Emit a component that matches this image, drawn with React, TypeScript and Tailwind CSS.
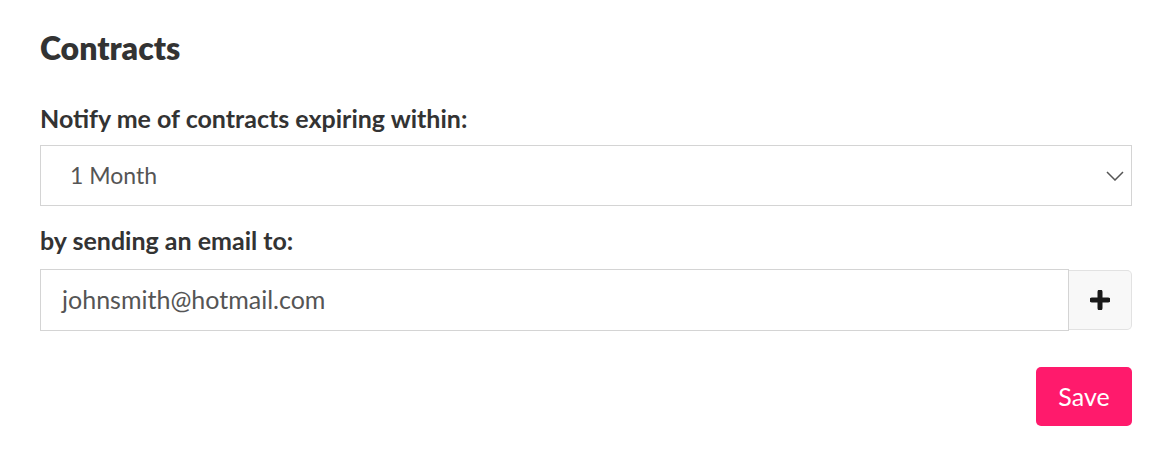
import React from "react";

export default function App() {
  return (
    <div
      className="w-[1162px] h-[460px] bg-white text-[#333] pl-[40px] pr-[30px] pt-[28px]"
      style={{ fontFamily: "Lato, 'Noto Sans', sans-serif" }}
    >
      <h2 className="text-[32px] font-extrabold leading-[40px]">Contracts</h2>

      <label className="block mt-[36px] text-[25px] font-bold leading-[28px]">
        Notify me of contracts expiring within:
      </label>
      <div className="mt-[13px] h-[61px] border border-[#d4d4d4] flex items-center justify-between pl-[29px] pr-[7px]">
        <span className="text-[23px] text-[#555]">1 Month</span>
        <svg viewBox="0 0 18 10" className="w-[18px] h-[10px]" fill="none" stroke="#555" strokeWidth={1.5}>
          <path d="M1 1l8 8 8-8" />
        </svg>
      </div>

      <label className="block mt-[20px] text-[25px] font-bold leading-[28px]">
        by sending an email to:
      </label>
      <div className="mt-[15px] flex items-center">
        <div className="flex-1 h-[62px] border border-[#d4d4d4] flex items-center pl-[21px]">
          <span className="text-[25px] text-[#555]">johnsmith@hotmail.com</span>
        </div>
        <button className="w-[63px] h-[60px] bg-[#f8f8f8] border border-l-0 border-[#e2e2e2] rounded-r-[5px] flex items-center justify-center">
          <svg viewBox="0 0 20 20" className="w-[20px] h-[20px]">
            <path d="M10 2v16M2 10h16" stroke="#1a1a1a" strokeWidth={5} strokeLinecap="round" />
          </svg>
        </button>
      </div>

      <div className="mt-[36px] flex justify-end">
        <button className="w-[96px] h-[59px] bg-[#ff1a6c] rounded-[5px] text-white text-[25px]">
          Save
        </button>
      </div>
    </div>
  );
}
